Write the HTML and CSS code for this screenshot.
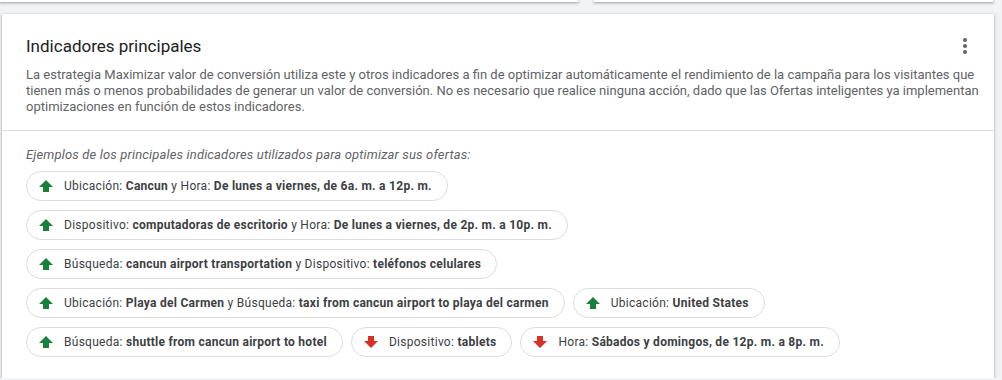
FILE: index.html
```html
<!DOCTYPE html>
<html lang="es">
<head>
  <meta charset="UTF-8">
  <title>Indicadores principales</title>
  <link rel="stylesheet" href="styles.css">
</head>
<body>
  <!-- tarjetas de la fila anterior (solo el borde inferior visible) -->
  <div class="prev-row">
    <div class="prev-card left"></div>
    <div class="prev-card right"></div>
  </div>

  <div class="card">
    <div class="card-head">
      <div class="head-row">
        <h2>Indicadores principales</h2>
        <button class="menu" aria-label="Más">
          <svg width="4" height="16" viewBox="0 0 4 16"><circle cx="2" cy="2" r="2"/><circle cx="2" cy="8" r="2"/><circle cx="2" cy="14" r="2"/></svg>
        </button>
      </div>
      <p class="desc">La estrategia Maximizar valor de conversión utiliza este y otros indicadores a fin de optimizar automáticamente el rendimiento de la campaña para los visitantes que tienen más o menos probabilidades de generar un valor de conversión. No es necesario que realice ninguna acción, dado que las Ofertas inteligentes ya implementan optimizaciones en función de estos indicadores.</p>
    </div>

    <div class="card-body">
      <p class="hint">Ejemplos de los principales indicadores utilizados para optimizar sus ofertas:</p>
      <div class="chips">
        <div class="chip-row">
          <span class="chip"><svg class="arrow up" viewBox="0 0 14 14"><path d="M7 1 L14 8 H10 V13 H4 V8 H0 Z"/></svg>Ubicación: <b>Cancun</b>&nbsp;y Hora: <b>De lunes a viernes, de 6a. m. a 12p. m.</b></span>
        </div>
        <div class="chip-row">
          <span class="chip"><svg class="arrow up" viewBox="0 0 14 14"><path d="M7 1 L14 8 H10 V13 H4 V8 H0 Z"/></svg>Dispositivo: <b>computadoras de escritorio</b>&nbsp;y Hora: <b>De lunes a viernes, de 2p. m. a 10p. m.</b></span>
        </div>
        <div class="chip-row">
          <span class="chip"><svg class="arrow up" viewBox="0 0 14 14"><path d="M7 1 L14 8 H10 V13 H4 V8 H0 Z"/></svg>Búsqueda: <b>cancun airport transportation</b>&nbsp;y Dispositivo: <b>teléfonos celulares</b></span>
        </div>
        <div class="chip-row">
          <span class="chip"><svg class="arrow up" viewBox="0 0 14 14"><path d="M7 1 L14 8 H10 V13 H4 V8 H0 Z"/></svg>Ubicación: <b>Playa del Carmen</b>&nbsp;y Búsqueda: <b>taxi from cancun airport to playa del carmen</b></span>
          <span class="chip"><svg class="arrow up" viewBox="0 0 14 14"><path d="M7 1 L14 8 H10 V13 H4 V8 H0 Z"/></svg>Ubicación: <b>United States</b></span>
        </div>
        <div class="chip-row">
          <span class="chip"><svg class="arrow up" viewBox="0 0 14 14"><path d="M7 1 L14 8 H10 V13 H4 V8 H0 Z"/></svg>Búsqueda: <b>shuttle from cancun airport to hotel</b></span>
          <span class="chip"><svg class="arrow down" viewBox="0 0 14 14"><path d="M7 13 L14 6 H10 V1 H4 V6 H0 Z"/></svg>Dispositivo: <b>tablets</b></span>
          <span class="chip"><svg class="arrow down" viewBox="0 0 14 14"><path d="M7 13 L14 6 H10 V1 H4 V6 H0 Z"/></svg>Hora: <b>Sábados y domingos, de 12p. m. a 8p. m.</b></span>
        </div>
      </div>
    </div>
  </div>
</body>
</html>
```

FILE: styles.css
```css
/* página */
body {
  margin: 0;
  background: #f1f3f4;
  font-family: Roboto, "Noto Sans", sans-serif;
  color: #3c4043;
}

/* fila anterior, cortada arriba */
.prev-row {
  display: flex;
  gap: 16px;
  height: 2px;
  padding-right: 9px;
}
.prev-card {
  background: #fff;
  height: 2px;
  box-shadow: 0 1px 2px rgba(60,64,67,0.3), 0 1px 3px 1px rgba(60,64,67,0.15);
}
.prev-card.left {
  width: 578px;
}
.prev-card.right {
  flex: 1;
}

/* tarjeta principal */
.card {
  background: #fff;
  margin: 12px 8px 0 2px;
  box-shadow: 0 1px 2px rgba(60,64,67,0.3), 0 1px 3px 1px rgba(60,64,67,0.15);
}
.card-head {
  padding: 20px 14px 15px 24px;
  border-bottom: 1px solid #dadce0;
}
.head-row {
  display: flex;
  justify-content: space-between;
  align-items: center;
  padding-right: 10px;
}
.card-head h2 {
  margin: 0;
  font-size: 17px;
  font-weight: 400;
  color: #202124;
  line-height: 24px;
}
.menu {
  border: none;
  background: none;
  padding: 0;
  margin-right: 3px;
  display: flex;
}
.menu svg {
  fill: #5f6368;
}
.desc {
  margin: 9px 0 0 0;
  font-size: 13px;
  line-height: 16px;
  color: #5f6368;
}

.card-body {
  padding: 16px 24px 21px 24px;
}
.hint {
  margin: 0 0 8px 0;
  font-size: 13px;
  font-style: italic;
  letter-spacing: 0.15px;
  line-height: 16px;
  color: #5f6368;
}
.chips {
  display: flex;
  flex-direction: column;
  gap: 9px;
}
.chip-row {
  display: flex;
  gap: 8px;
}
.chip {
  display: inline-flex;
  align-items: center;
  height: 28px;
  padding: 0 15px 0 12px;
  border: 1px solid #dadce0;
  border-radius: 15px;
  font-size: 12px;
  letter-spacing: 0.27px;
  color: #3c4043;
  white-space: pre;
}
.chip b {
  font-weight: 700;
}
.arrow {
  width: 14px;
  height: 14px;
  margin-right: 11px;
}
.arrow.up {
  fill: #188038;
}
.arrow.down {
  fill: #d93025;
}
```
